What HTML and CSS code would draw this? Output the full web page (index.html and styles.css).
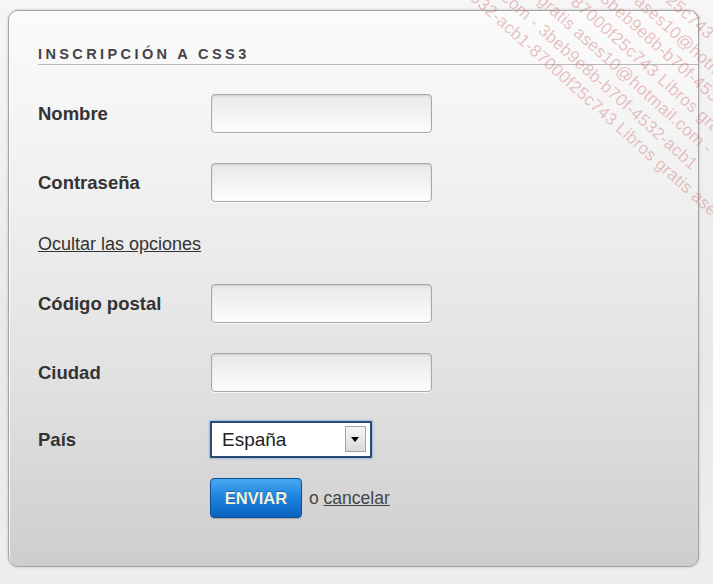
FILE: index.html
```html
<!DOCTYPE html>
<html lang="es">
<head>
<meta charset="utf-8">
<title>Inscripción a CSS3</title>
<link rel="stylesheet" href="styles.css">
</head>
<body>
<div class="page">
  <form class="panel">
    <h2 class="title">INSCRIPCIÓN A CSS3</h2>
    <div class="fields">
      <div class="row">
        <label class="lbl" for="nombre">Nombre</label>
        <input class="field" id="nombre" type="text">
      </div>
      <div class="row">
        <label class="lbl" for="pass">Contraseña</label>
        <input class="field" id="pass" type="password">
      </div>
      <div class="toggle"><a href="#" class="toggle-link">Ocultar las opciones</a></div>
      <div class="row">
        <label class="lbl" for="cp">Código postal</label>
        <input class="field" id="cp" type="text">
      </div>
      <div class="row">
        <label class="lbl" for="ciudad">Ciudad</label>
        <input class="field" id="ciudad" type="text">
      </div>
      <div class="submit-group">
        <div class="row row-select">
          <label class="lbl" for="pais">País</label>
          <div class="select-wrap">
            <select class="select" id="pais"><option>España</option></select>
            <span class="arrow"></span>
          </div>
        </div>
        <div class="actions">
          <button type="button" class="btn">ENVIAR</button>
          <span class="cancel">o <a href="#" class="cancel-link">cancelar</a></span>
        </div>
      </div>
    </div>
  </form>
  <div class="watermark" aria-hidden="true">
    <div class="wm-lines">
      <div class="wm wm-g">0f25c743 Libros gratis</div>
      <div class="wm wm-f">s ases10@hotmail.com</div>
      <div class="wm wm-e">- 3beb9e8b-b70f-4532</div>
      <div class="wm wm-d">1-87000f25c743 Libros gratis</div>
      <div class="wm wm-c">s gratis ases10@hotmail.com -</div>
      <div class="wm wm-b">l.com - 3beb9e8b-b70f-4532-acb1</div>
      <div class="wm wm-a">4532-acb1-87000f25c743 Libros gratis ases</div>
    </div>
  </div>
</div>
</body>
</html>
```
FILE: styles.css
```css
* { box-sizing: border-box; }
html, body { margin: 0; padding: 0; }
body {
  background: #ededed;
  font-family: "Liberation Sans", Arial, sans-serif;
  width: 713px;
  height: 584px;
  overflow: hidden;
}
.page {
  position: relative;
  width: 713px;
  height: 584px;
  padding: 10px 14px 0 8px;
  background: linear-gradient(to bottom, #f6f6f6 0%, #e8e8e8 60%, #eeeeee 100%);
}
.panel {
  height: 557px;
  border: 1px solid #a3a3a3;
  border-radius: 10px;
  background: linear-gradient(to bottom, #fbfbfb 0%, #f1f1f1 30%, #e2e2e2 65%, #cecece 100%);
  box-shadow: 0 0 2px 1px rgba(0,0,0,0.10), inset 1px 1px 0 rgba(255,255,255,0.8);
  padding: 0 0 0 29px;
  margin: 0;
}
.title {
  margin: 35px 0 0 0;
  font-size: 14.5px;
  line-height: 16px;
  font-weight: bold;
  letter-spacing: 3.4px;
  color: #45434a;
  padding-bottom: 2px;
  border-bottom: 1px solid #b9b9b9;
}
.fields {
  display: flex;
  flex-direction: column;
  gap: 30px;
  margin-top: 29px;
}
.row {
  display: flex;
  align-items: center;
  height: 39px;
}
.lbl {
  width: 173px;
  flex: none;
  font-size: 18.5px;
  font-weight: bold;
  color: #333;
}
.field {
  width: 221px;
  height: 39px;
  border: 1px solid #a8a8a8;
  border-radius: 4px;
  background: linear-gradient(to bottom, #e8e8e8, #fdfdfd);
  box-shadow: inset 0 1px 2px rgba(0,0,0,0.12), 0 1px 0 rgba(255,255,255,0.7);
  margin: 0;
}
.toggle {
  height: 20px;
  margin-top: 2px;
  line-height: 20px;
}
.toggle-link {
  font-size: 18px;
  color: #333;
  text-decoration: underline;
}
.submit-group {
  display: flex;
  flex-direction: column;
  gap: 20px;
  margin-top: -1px;
}
.row-select { height: 37px; }
.select-wrap {
  position: relative;
  width: 162px;
  height: 37px;
  margin-left: -1px;
}
.select {
  appearance: none;
  -webkit-appearance: none;
  width: 162px;
  height: 37px;
  border: 2px solid #2a4a74;
  border-radius: 1px;
  background: #fff;
  box-shadow: 0 0 2px 1px rgba(110,160,220,0.55);
  font-family: "Liberation Sans", Arial, sans-serif;
  font-size: 19px;
  color: #222;
  padding: 0 0 0 10px;
  margin: 0;
}
.arrow {
  position: absolute;
  right: 6px;
  top: 5px;
  width: 21px;
  height: 26px;
  border: 1px solid #a4a4a4;
  background: linear-gradient(to bottom, #f6f6f6, #dadada);
  pointer-events: none;
}
.arrow::after {
  content: "";
  position: absolute;
  left: 5px;
  top: 10px;
  border-left: 4.5px solid transparent;
  border-right: 4.5px solid transparent;
  border-top: 5px solid #000;
}
.actions {
  display: flex;
  align-items: center;
  height: 40px;
  padding-left: 172px;
}
.btn {
  width: 92px;
  height: 40px;
  border: 1px solid #0b4f98;
  border-radius: 4px;
  background: linear-gradient(to bottom, #4aa8f0 0%, #1d86de 45%, #0a62c0 100%);
  color: #f3f0dc;
  font-family: "Liberation Sans", Arial, sans-serif;
  font-weight: bold;
  font-size: 16.5px;
  text-shadow: 0 -1px 0 rgba(0,0,0,0.25);
  box-shadow: 0 1px 1px rgba(0,0,0,0.2);
  padding: 0;
}
.cancel {
  margin-left: 7px;
  font-size: 17.5px;
  color: #444;
}
.cancel-link { color: #444; text-decoration: underline; }

.watermark {
  position: absolute;
  left: 0;
  top: 0;
  width: 713px;
  height: 584px;
  overflow: hidden;
  pointer-events: none;
}
.wm-lines {
  position: absolute;
  left: 464px;
  top: -201px;
  width: 700px;
  transform: rotate(42deg);
  transform-origin: 0 0;
}
.wm {
  white-space: pre;
  font-family: "Liberation Sans", Arial, sans-serif;
  font-size: 17px;
  line-height: 21.5px;
  letter-spacing: 0.3px;
  color: rgba(200, 100, 100, 0.38);
}
.wm-g { padding-left: 270px; }
.wm-f { padding-left: 248px; }
.wm-e { padding-left: 224px; }
.wm-d { padding-left: 200px; }
.wm-c { padding-left: 176px; }
.wm-b { padding-left: 152px; }
.wm-a { padding-left: 128px; }
```
